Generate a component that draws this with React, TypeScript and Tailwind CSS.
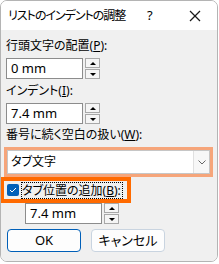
import React from 'react';

const font = "font-['Noto_Sans','Noto_Sans_CJK_JP',sans-serif] [font-feature-settings:'palt']";

const Spin: React.FC<{ value: string }> = ({ value }) => (
  <div className="flex h-[21px] items-stretch gap-[2px]">
    <div className="flex w-[77px] items-center border border-[#8c8c8c] bg-white pl-[4px] text-[13px] text-black">
      {value}
    </div>
    <div className="flex w-[15px] flex-col gap-[1px]">
      <div className="flex flex-1 items-center justify-center border border-[#a8a8a8] bg-[#f5f5f5]">
        <svg width="6" height="3" viewBox="0 0 6 3">
          <polygon points="0,3 6,3 3,0" fill="#000" />
        </svg>
      </div>
      <div className="flex flex-1 items-center justify-center border border-[#a8a8a8] bg-[#f5f5f5]">
        <svg width="6" height="3" viewBox="0 0 6 3">
          <polygon points="0,0 6,0 3,3" fill="#000" />
        </svg>
      </div>
    </div>
  </div>
);

export default function App() {
  return (
    <div className={`h-[264px] w-[219px] bg-white ${font}`}>
      <div className="flex h-[262px] w-[218px] flex-col overflow-hidden rounded-[7px] border border-[#b4b4b4]">
        {/* Title bar */}
        <div className="flex h-[29px] shrink-0 items-center justify-between bg-white pl-[7px] pr-[16px] text-[12px] text-black">
          <div className="flex items-center">
            <span className="w-[135px] whitespace-nowrap tracking-[-1px]">リストのインデントの調整</span>
            <span className="pl-[4px] text-[13px]">?</span>
          </div>
          <svg width="12" height="12" viewBox="0 0 12 12" className="shrink-0">
            <line x1="1" y1="1" x2="11" y2="11" stroke="#1a1a1a" strokeWidth="1.3" />
            <line x1="11" y1="1" x2="1" y2="11" stroke="#1a1a1a" strokeWidth="1.3" />
          </svg>
        </div>

        {/* Body */}
        <div className="flex flex-1 flex-col bg-[#f0f0f0] pl-[5px] text-[12px] text-black">
          <div className="mt-[8px] h-[16px] leading-[16px]">
            行頭文字の配置(<span className="underline">P</span>):
          </div>
          <div className="mt-[4px]">
            <Spin value="0 mm" />
          </div>
          <div className="mt-[4px] h-[16px] leading-[16px]">
            インデント(<span className="underline">I</span>):
          </div>
          <div className="mt-[4px]">
            <Spin value="7.4 mm" />
          </div>
          <div className="mt-[3px] h-[16px] leading-[16px]">
            番号に続く空白の扱い(<span className="underline">W</span>):
          </div>

          {/* Combo box */}
          <div className="ml-[-2px] mt-[4px] h-[30px] w-[209px] border-[3px] border-[#f6a57a]">
            <div className="flex h-full border border-[#c6c6c6] bg-white">
              <div className="flex flex-1 items-center pl-[3px]">タブ文字</div>
              <div className="flex w-[16px] items-center justify-center border-l border-[#e0e0e0] bg-[#f7f7f7]">
                <svg width="8" height="5" viewBox="0 0 8 5">
                  <path d="M0.5 0.5 L4 4 L7.5 0.5" stroke="#666" strokeWidth="1" fill="none" />
                </svg>
              </div>
            </div>
          </div>

          {/* Checkbox row */}
          <div className="ml-[-6px] flex h-[26px] w-[131px] items-center border-[4px] border-[#ff6a00] pl-[3px]">
            <div className="flex h-[12px] w-[12px] items-center justify-center rounded-[2px] bg-[#005fb8]">
              <svg width="8" height="6" viewBox="0 0 8 6">
                <path d="M1 3 L3 5 L7 1" stroke="#fff" strokeWidth="1" fill="none" />
              </svg>
            </div>
            <div className="ml-[2px] flex h-[17px] items-center border border-dotted border-black pr-[1px] leading-[15px]">
              タブ位置の追加(<span className="underline">B</span>):
            </div>
          </div>

          <div className="ml-[19px]">
            <Spin value="7.4 mm" />
          </div>

          {/* Buttons */}
          <div className="mt-[5px] flex gap-[10px] pl-[1px] text-[13px]">
            <div className="flex h-[23px] w-[74px] items-center justify-center rounded-[4px] border border-[#005fb8] bg-[#fdfdfd]">
              OK
            </div>
            <div className="flex h-[23px] w-[74px] items-center justify-center rounded-[4px] border border-[#c9d4e0] bg-[#fdfdfd]">
              キャンセル
            </div>
          </div>
        </div>
      </div>
    </div>
  );
}
